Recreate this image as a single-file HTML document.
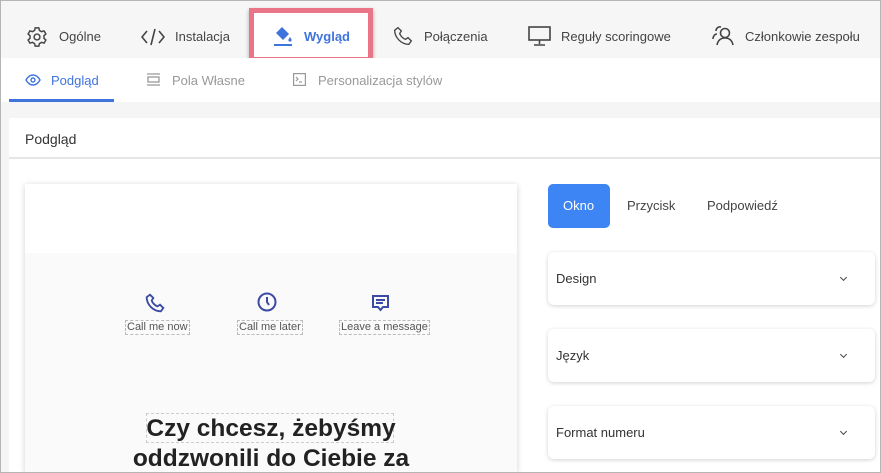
<!DOCTYPE html>
<html><head><meta charset="utf-8"><style>
*{margin:0;padding:0;box-sizing:border-box}
html,body{width:881px;height:473px;overflow:hidden}
body{font-family:"Liberation Sans",sans-serif;background:#f5f5f5;position:relative;color:#333}
.frame{position:absolute;left:0;top:0;width:881px;height:473px;border:1px solid #b5b5b5;pointer-events:none;z-index:10}
.a{position:absolute;white-space:nowrap}
.nav{position:absolute;left:0;top:0;width:881px;height:58px;background:#f6f6f6}
.nt{font-size:13px;color:#444;top:29px}
.sub{position:absolute;left:0;top:58px;width:881px;height:44px;background:#fff}
.st{font-size:13px;color:#999;top:73px}
svg{position:absolute}
.card{position:absolute;left:548px;width:327px;height:53px;background:#fff;border-radius:6px;box-shadow:0 1px 4px rgba(0,0,0,.18)}
.card span{position:absolute;left:8px;top:19px;font-size:13px;color:#333}
.card i{position:absolute;left:293px;top:23px;width:5px;height:5px;border-right:1.3px solid #444;border-bottom:1.3px solid #444;transform:rotate(45deg)}
.lbl{font-size:11px;color:#555;border:1px dashed #bbb;top:320px;padding:0 1px;line-height:13px}
</style></head><body>
<div class="nav"></div>
<svg style="left:26px;top:26px" width="22" height="22" viewBox="0 0 24 24" fill="none" stroke="#444" stroke-width="1.6"><path d="M10 2h4l.6 2.8 2.4 1.4 2.7-.9 2 3.4-2.1 1.9v2.8l2.1 1.9-2 3.4-2.7-.9-2.4 1.4L14 22h-4l-.6-2.8-2.4-1.4-2.7.9-2-3.4 2.1-1.9v-2.8L2.3 8.7l2-3.4 2.7.9 2.4-1.4z"/><circle cx="12" cy="12" r="3.2"/></svg>
<div class="a nt" style="left:59px">Ogólne</div>
<svg style="left:141px;top:28px" width="24" height="18" viewBox="0 0 24 18" fill="none" stroke="#444" stroke-width="1.6"><path d="M6 3L1 9l5 6M18 3l5 6-5 6M14 1l-4 16"/></svg>
<div class="a nt" style="left:175px">Instalacja</div>
<div class="a" style="left:249px;top:8px;width:124px;height:54px;border:5px solid #e97587;background:#fff;box-shadow:0 2px 4px rgba(0,0,0,.3)"></div>
<svg style="left:273px;top:25px" width="22" height="22" viewBox="0 0 22 22" fill="#3f74dd"><path d="M9 2l7 7-6 6-7-7 2-2z"/><path d="M17 12c1 1.5 1.6 2.4 1.6 3a1.6 1.6 0 0 1-3.2 0c0-.6.6-1.5 1.6-3z"/><rect x="1" y="19" width="18" height="2"/></svg>
<div class="a nt" style="left:304px;color:#3f74dd;font-weight:bold">Wygląd</div>
<svg style="left:393px;top:26px" width="20" height="20" viewBox="0 0 24 24" fill="none" stroke="#444" stroke-width="1.6"><path d="M6 2l4 4-2 3c1 3 4 6 7 7l3-2 4 4-3 4C10 22 2 14 2 5z"/></svg>
<div class="a nt" style="left:424px">Połączenia</div>
<svg style="left:528px;top:26px" width="23" height="20" viewBox="0 0 23 20" fill="none" stroke="#444" stroke-width="1.6"><rect x="1" y="1" width="21" height="13"/><path d="M11.5 14v4M6 19h11"/></svg>
<div class="a nt" style="left:561px">Reguły scoringowe</div>
<svg style="left:712px;top:25px" width="22" height="21" viewBox="0 0 22 21" fill="none" stroke="#444" stroke-width="1.6"><circle cx="13" cy="8" r="4.5"/><path d="M5 20c1-5 4-7 8-7s7 2 8 7M9 2a4 4 0 0 0-5 4M1 14c0-3 2-5 4-5"/></svg>
<div class="a nt" style="left:745px">Członkowie zespołu</div>

<div class="sub"></div>
<svg style="left:25px;top:74px" width="16" height="12" viewBox="0 0 16 12" fill="none" stroke="#3f74dd" stroke-width="1.4"><path d="M1 6c2-3.5 4.5-5 7-5s5 1.5 7 5c-2 3.5-4.5 5-7 5S3 9.5 1 6z"/><circle cx="8" cy="6" r="2"/></svg>
<div class="a st" style="left:51px;color:#3f74dd">Podgląd</div>
<div class="a" style="left:9px;top:99px;width:105px;height:3px;background:#3f74dd"></div>
<svg style="left:146px;top:73px" width="15" height="13" viewBox="0 0 15 13" fill="none" stroke="#999" stroke-width="1.3"><path d="M1 1h13M1 12h13"/><rect x="2" y="4" width="11" height="5"/></svg>
<div class="a st" style="left:172px">Pola Własne</div>
<svg style="left:293px;top:73px" width="13" height="13" viewBox="0 0 13 13" fill="none" stroke="#999" stroke-width="1.2"><rect x=".6" y=".6" width="11.8" height="11.8"/><path d="M3 4l2 2-2 2M6 9h3"/></svg>
<div class="a st" style="left:318px">Personalizacja stylów</div>

<div class="a" style="left:9px;top:118px;width:872px;height:355px;background:#fff"></div>
<div class="a" style="left:25px;top:131px;font-size:14px;color:#333">Podgląd</div>
<div class="a" style="left:9px;top:157px;width:872px;height:2px;background:#e6e6e6"></div>

<div class="a" style="left:25px;top:184px;width:492px;height:289px;background:#fafafa;box-shadow:0 1px 6px rgba(0,0,0,.18)"></div>
<div class="a" style="left:25px;top:184px;width:492px;height:69px;background:#fff"></div>
<svg style="left:145px;top:293px" width="20" height="20" viewBox="0 0 24 24" fill="none" stroke="#3b4aa5" stroke-width="2.2"><path d="M6 2l4 4-2 3c1 3 4 6 7 7l3-2 4 4-3 4C10 22 2 14 2 5z"/></svg>
<svg style="left:257px;top:292px" width="20" height="20" viewBox="0 0 20 20" fill="none" stroke="#3b4aa5" stroke-width="2"><circle cx="10" cy="10" r="8.5"/><path d="M10 5v5l2 3"/></svg>
<svg style="left:371px;top:294px" width="19" height="19" viewBox="0 0 19 19" fill="none" stroke="#3b4aa5" stroke-width="2"><path d="M2 2h15v11h-5l-2.5 3-2.5-3H2z"/><path d="M5 6h9M5 9h7"/></svg>
<div class="a lbl" style="left:125px">Call me now</div>
<div class="a lbl" style="left:237px">Call me later</div>
<div class="a lbl" style="left:339px">Leave a message</div>
<div class="a" style="left:146px;top:413px;width:248px;height:30px;border:1px dashed #ccc"></div>
<div class="a" style="left:25px;top:414px;width:492px;text-align:center;font-size:24.5px;font-weight:bold;color:#222;line-height:30px">Czy chcesz, żebyśmy<br>oddzwonili do Ciebie za</div>

<div class="a" style="left:548px;top:184px;width:62px;height:44px;background:#3d84f5;border-radius:5px"></div>
<div class="a" style="left:563px;top:198px;font-size:13px;color:#fff">Okno</div>
<div class="a" style="left:627px;top:198px;font-size:13px;color:#444">Przycisk</div>
<div class="a" style="left:707px;top:198px;font-size:13px;color:#444">Podpowiedź</div>
<div class="card" style="top:252px"><span>Design</span><i></i></div>
<div class="card" style="top:329px"><span>Język</span><i></i></div>
<div class="card" style="top:406px"><span>Format numeru</span><i></i></div>
<div class="frame"></div>
</body></html>
